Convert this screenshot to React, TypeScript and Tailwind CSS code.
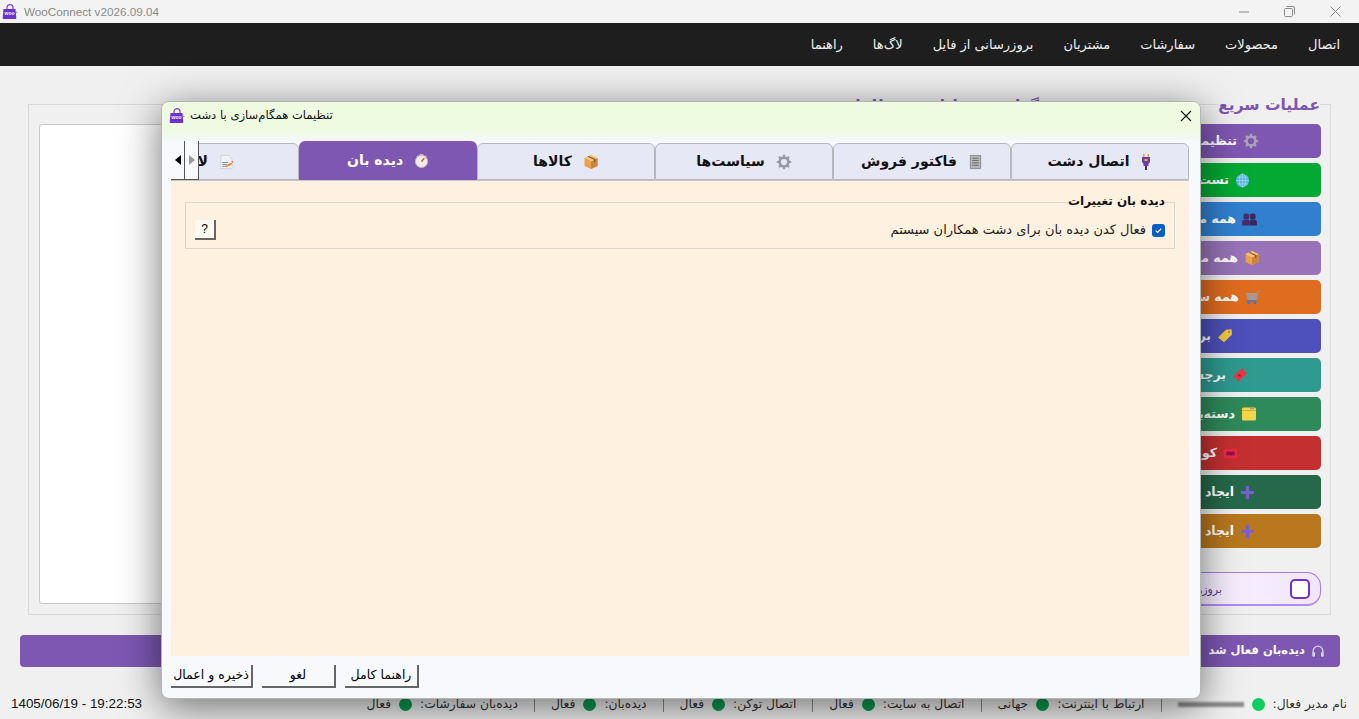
import { type ReactNode } from 'react';

const Logo = ({ size = 16 }: { size?: number }) => (
  <svg width={size} height={size} viewBox="0 0 16 16" className="shrink-0">
    <path d="M5 5V3.600a3 3 0 0 1 6 0V5" fill="none" stroke="#7c3fd0" strokeWidth="1.200" />
    <path d="M1.500 5h12l.8 9a1 1 0 0 1-1 1H1.700a1 1 0 0 1-1-1z" fill="#6d2fd6" />
    <path d="M14 7.500l2 .8-2 .9z" fill="#22c7c7" />
    <text x="7.500" y="11.400" textAnchor="middle" fontSize="5" fontWeight="700" fill="#fff" fontFamily="Liberation Sans">woo</text>
  </svg>
);

const Gear = ({ c = '#a8a4b4' }: { c?: string }) => (
  <svg width="16" height="16" viewBox="0 0 16 16" className="shrink-0">
    <circle cx="8" cy="8" r="4.400" fill="none" stroke={c} strokeWidth="2.600" />
    <path d="M8 .8v2.600M8 12.600v2.600M.8 8h2.600M12.600 8h2.600M2.900 2.900l1.900 1.900M11.200 11.200l1.900 1.900M13.100 2.900l-1.900 1.900M4.800 11.200l-1.900 1.900" stroke={c} strokeWidth="2.200" />
  </svg>
);

const Globe = () => (
  <svg width="15" height="15" viewBox="0 0 16 16" className="shrink-0">
    <circle cx="8" cy="8" r="7" fill="#56b4e4" />
    <path d="M1 8h14M8 1v14M2.400 4.400h11.200M2.400 11.600h11.200" stroke="#a7dcf4" strokeWidth="0.800" />
    <ellipse cx="8" cy="8" rx="3.400" ry="7" fill="none" stroke="#a7dcf4" strokeWidth="0.800" />
  </svg>
);

const Users = () => (
  <svg width="15" height="13" viewBox="0 0 16 14" className="shrink-0">
    <rect x="1.500" y="0.500" width="6" height="6.500" rx="2" fill="#4a2b6b" />
    <rect x="8.500" y="0.500" width="6" height="6.500" rx="2" fill="#3d2560" />
    <path d="M0 13.500V9.600c0-1.400 1-2.400 2.400-2.400h4.400c1 0 1.200.8 1.200 2.400v3.900z" fill="#4a2b6b" />
    <path d="M8 13.500V9.600c0-1.400 1-2.400 2.400-2.400h3.200c1.400 0 2.400 1 2.400 2.400v3.900z" fill="#3d2560" />
  </svg>
);

const Box = () => (
  <svg width="16" height="16" viewBox="0 0 16 16" className="shrink-0">
    <path d="M8 1l6.500 3v8L8 15l-6.500-3V4z" fill="#e8a24c" />
    <path d="M8 7.400L14.500 4v8L8 15z" fill="#cf8535" />
    <path d="M1.500 4L8 1l6.500 3L8 7.400z" fill="#f3c27e" />
    <path d="M4.400 2.600l6.600 3.200v2.400l1.400-.7V5L5.800 2z" fill="#8a5a2a" />
  </svg>
);

const Cart = () => (
  <svg width="16" height="16" viewBox="0 0 16 16" className="shrink-0">
    <path d="M1 4h11.500l-1 7H2.500z" fill="#a79a96" />
    <path d="M11.500 11L13 2.500h2" fill="none" stroke="#8b99a8" strokeWidth="1.200" />
    <path d="M1.500 12h10" stroke="#3b78c4" strokeWidth="1.200" />
    <circle cx="3.500" cy="14" r="1.300" fill="#3b78c4" />
    <circle cx="10" cy="14" r="1.300" fill="#3b78c4" />
  </svg>
);

const Tag = () => (
  <svg width="16" height="16" viewBox="0 0 16 16" className="shrink-0">
    <path d="M1 9.500L9 1.800l5.500-.6.500 5.300-8 7.800z" fill="#f2c93e" />
    <circle cx="12" cy="4" r="1" fill="#e0603c" />
  </svg>
);

const Ticket = () => (
  <svg width="16" height="16" viewBox="0 0 16 16" className="shrink-0">
    <path d="M1 10l9-9 1.800 1.800a1.500 1.500 0 0 0 2 2L15 6l-9 9-1.200-1.200a1.500 1.500 0 0 0-2.400-2.400z" fill="#ee3340" />
    <path d="M6.500 7.500l2 2" stroke="#a8101e" strokeWidth="1.500" />
  </svg>
);

const Folder = () => (
  <svg width="16" height="16" viewBox="0 0 16 16" className="shrink-0">
    <rect x="1" y="1.500" width="14" height="13" rx="1.500" fill="#f7d54a" />
    <path d="M1 4.500h14" stroke="#d8b22e" />
    <path d="M9 2.800h4" stroke="#7a8fb0" />
  </svg>
);

const Coupon = () => (
  <svg width="15" height="13" viewBox="0 0 16 14" className="shrink-0">
    <rect x="1" y="2" width="14" height="10" rx="2" fill="#ee2b42" />
    <rect x="3.500" y="5" width="9" height="4" fill="#8c1450" />
  </svg>
);

const Plus = () => (
  <svg width="15" height="15" viewBox="0 0 16 16" className="shrink-0">
    <path d="M6.300 1h3.400v5.300H15v3.400H9.700V15H6.300V9.700H1V6.300h5.300z" fill="#7a5fd0" />
  </svg>
);

const Plug = () => (
  <svg width="12" height="16" viewBox="0 0 12 16" className="shrink-0">
    <path d="M3 0h1.500v3H3zM7.500 0H9v3H7.500z" fill="#e0a93a" />
    <path d="M2 3h8v5l-1.500 2v2h-5v-2L2 8z" fill="#6a3fa0" />
    <rect x="5" y="12" width="2" height="4" fill="#42285f" />
    <rect x="4.500" y="5" width="3" height="2" fill="#e0a93a" />
  </svg>
);

const Invoice = () => (
  <svg width="15" height="16" viewBox="0 0 16 16" className="shrink-0">
    <path d="M2.500 1h11v14h-11z" fill="#b7b7b7" stroke="#777" strokeWidth="0.800" />
    <path d="M4.500 4h7M4.500 6.500h7M4.500 9h7M4.500 11.500h7" stroke="#6a6a6a" />
  </svg>
);

const Stopwatch = () => (
  <svg width="15" height="15" viewBox="0 0 16 16" className="shrink-0">
    <circle cx="8" cy="9" r="6.500" fill="#f2ece6" stroke="#c7c0ba" />
    <path d="M6 1h4v1.500H6zM2.500 3.500l1.500-1 1 1-1.500 1zM13.500 3.500l-1.500-1-1 1 1.500 1z" fill="#c7c0ba" />
    <path d="M8 9l3-3.500" stroke="#e0462e" strokeWidth="1.500" />
  </svg>
);

const LogIcon = () => (
  <svg width="15" height="16" viewBox="0 0 16 16" className="shrink-0">
    <path d="M2 1h8l4 4v10H2z" fill="#f2f2f6" stroke="#c9c9d2" strokeWidth="0.800" />
    <path d="M3.500 8.500h6M3.500 10.500h5M3.500 12.500h4" stroke="#7d8aa0" />
    <path d="M6 12.500l7-4 1.500 1.500-7 3.500z" fill="#f08a24" />
    <path d="M13 7.500l2-.7-.5 2z" fill="#ea3a6a" />
  </svg>
);

const Headphones = () => (
  <svg width="14" height="14" viewBox="0 0 16 16" className="shrink-0" fill="none">
    <path d="M2.500 10V8a5.500 5.500 0 0 1 11 0v2" stroke="#d9d6e6" strokeWidth="1.500" />
    <rect x="1.500" y="9" width="3" height="5.500" rx="1.200" fill="#d9d6e6" />
    <rect x="11.500" y="9" width="3" height="5.500" rx="1.200" fill="#d9d6e6" />
  </svg>
);

type QuickAction = { label: string; icon: ReactNode; row: string };

const quickActions: QuickAction[] = [
  { label: 'تنظیمات همگام‌سازی', icon: <Gear />, row: 'bg-[#7e57b2] pr-[62px]' },
  { label: 'تست اتصال به سایت', icon: <Globe />, row: 'bg-[#04a934] pr-[71px]' },
  { label: 'همه مشتریان', icon: <Users />, row: 'bg-[#3180d0] pr-[64px]' },
  { label: 'همه محصولات', icon: <Box />, row: 'bg-[#9873b8] pr-[61px]' },
  { label: 'همه سفارشات', icon: <Cart />, row: 'bg-[#e06c1f] pr-[60px]' },
  { label: 'برچسب‌ها', icon: <Tag />, row: 'bg-[#4e50bb] pr-[88px]' },
  { label: 'برچسب‌های ویژه', icon: <Ticket />, row: 'bg-[#2f9a90] pr-[73px]' },
  { label: 'دسته‌بندی‌ها', icon: <Folder />, row: 'bg-[#2e8a5a] pr-[64px]' },
  { label: 'کوپن‌ها', icon: <Coupon />, row: 'bg-[#c43030] pr-[83px]' },
  { label: 'ایجاد محصول جدید', icon: <Plus />, row: 'bg-[#26694a] pr-[66px]' },
  { label: 'ایجاد سفارش جدید', icon: <Plus />, row: 'bg-[#b9781e] pr-[66px]' },
];

const navItems = ['اتصال', 'محصولات', 'سفارشات', 'مشتریان', 'بروزرسانی از فایل', 'لاگ‌ها', 'راهنما'];

const tabs = [
  { label: 'اتصال دشت', icon: <Plug />, place: 'justify-center' },
  { label: 'فاکتور فروش', icon: <Invoice />, place: 'justify-center' },
  { label: 'سیاست‌ها', icon: <Gear c="#9a98a6" />, place: 'justify-center' },
  { label: 'کالاها', icon: <Box />, place: 'justify-center' },
  { label: 'دیده بان', icon: <Stopwatch />, place: 'justify-center', active: true },
  { label: 'لاگ‌ها', icon: <LogIcon />, place: 'justify-start pr-[64px]' },
];

const statusItems = [
  { label: 'ارتباط با اینترنت:', value: 'جهانی' },
  { label: 'اتصال به سایت:', value: 'فعال' },
  { label: 'اتصال توکن:', value: 'فعال' },
  { label: 'دیده‌بان:', value: 'فعال' },
  { label: 'دیده‌بان سفارشات:', value: 'فعال' },
];

const DialogButton = ({ children, className }: { children: ReactNode; className: string }) => (
  <button className={`h-[23px] flex items-center justify-center bg-[#f7f9fb] border-r-2 border-b-2 border-r-[#666] border-b-[#666] text-[12.5px] text-black ${className}`}>
    {children}
  </button>
);

const SyncDialog = () => (
  <div className="absolute left-[161px] top-[101px] w-[1040px] h-[598px] flex flex-col rounded-lg border border-[#b4b8b4] bg-[#f7f9fc] shadow-[0_8px_40px_rgba(0,0,0,0.55)] overflow-hidden">
    <div className="h-[28px] shrink-0 flex items-center gap-[5px] pl-[7px] pr-[7px] bg-[#eefbe1]" dir="ltr">
      <Logo />
      <span dir="rtl" className="text-[11.6px] text-[#111]">تنظیمات همگام‌سازی با دشت</span>
      <svg width="12" height="12" viewBox="0 0 12 12" className="ml-auto mr-[1px]">
        <path d="M1 1l10 10M11 1L1 11" stroke="#111" strokeWidth="1.100" />
      </svg>
    </div>
    <div className="h-[11px] shrink-0 bg-gradient-to-b from-[#eefbe1] to-[#f5f7fb]" />

    <div className="relative ml-[9px] mr-[11px] h-[39px] shrink-0">
      <div className="flex items-end h-full overflow-hidden" dir="rtl">
        {tabs.map((tab) =>
          tab.active ? (
            <div key={tab.label} className={`w-[178px] h-[39px] shrink-0 flex items-center gap-[11px] rounded-t-md bg-[#7e57b2] text-white text-[14px] font-bold ${tab.place}`}>
              {tab.icon}
              <span>{tab.label}</span>
            </div>
          ) : (
            <div key={tab.label} className={`w-[178px] h-[37px] shrink-0 flex items-center gap-[11px] rounded-t-md border border-[#b6b8c0] bg-[#e6e8f6] text-[#111] text-[14px] font-bold ${tab.place}`}>
              {tab.icon}
              <span>{tab.label}</span>
            </div>
          ),
        )}
      </div>
      <div className="absolute left-0 top-0 h-[39px] w-[28px] flex bg-[#f8f9fc] border-b border-[#555]">
        <div className="w-[14px] flex items-center justify-center border-r border-[#555]">
          <span className="w-0 h-0 border-y-[5px] border-y-transparent border-r-[6px] border-r-black" />
        </div>
        <div className="w-[14px] flex items-center justify-center border-r border-[#555]">
          <span className="w-0 h-0 border-y-[5px] border-y-transparent border-l-[6px] border-l-[#999]" />
        </div>
      </div>
    </div>

    <div className="ml-[9px] mr-[11px] h-[476px] shrink-0 bg-[#fef1df] border-t border-[#c4c6cc] px-[14px] pt-[21px]" dir="rtl">
      <div className="relative h-[47px] border border-[#dcd8d0] flex items-center justify-between pr-[9px] pl-[9px] pt-[9px]">
        <span className="absolute right-[9px] -top-[9px] bg-[#fef1df] text-[12px] font-bold text-[#111] leading-[15px]">دیده بان تغییرات</span>
        <label className="flex items-center gap-[6px] text-[13px] text-[#222]">
          <span className="w-[13px] h-[13px] rounded-[3px] bg-[#0a5fc4] flex items-center justify-center">
            <svg width="9" height="9" viewBox="0 0 10 10">
              <path d="M2 5.200l2 2 4-4.200" fill="none" stroke="#fff" strokeWidth="1.200" />
            </svg>
          </span>
          فعال کدن دیده بان برای دشت همکاران سیستم
        </label>
        <button className="w-[21px] h-[20px] bg-[#fdfaf3] border-r-2 border-b-2 border-r-[#666] border-b-[#666] text-[12px] text-black flex items-center justify-center font-['Liberation_Sans',sans-serif]">?</button>
      </div>
    </div>

    <div className="flex gap-[9px] pl-[9px] pt-[9px]" dir="ltr">
      <DialogButton className="w-[82px]"><span dir="rtl">ذخیره و اعمال</span></DialogButton>
      <DialogButton className="w-[74px]"><span dir="rtl">لغو</span></DialogButton>
      <DialogButton className="w-[74px]"><span dir="rtl">راهنما کامل</span></DialogButton>
    </div>
  </div>
);

export default function App() {
  return (
    <div className="relative w-screen h-screen overflow-hidden bg-[#f0f0f0] flex flex-col font-['DejaVu_Sans',sans-serif]">
      {/* window title */}
      <div className="h-[23px] shrink-0 flex items-center bg-[#f3f3f3] pl-[2px] gap-[6px]">
        <Logo />
        <span className="text-[11.7px] text-[#8a8a8a] font-['Liberation_Sans',sans-serif]">WooConnect v2026.09.04</span>
        <svg width="10" height="2" viewBox="0 0 10 2" className="ml-auto mr-[29px]"><path d="M0 1h10" stroke="#8a8a8a" /></svg>
        <svg width="11" height="11" viewBox="0 0 11 11" className="mr-[29px]" fill="none" stroke="#8a8a8a">
          <rect x="0.500" y="2.500" width="8" height="8" rx="1" />
          <path d="M2.500 .5h6.500a1.500 1.500 0 0 1 1.500 1.500v6.500" />
        </svg>
        <svg width="11" height="11" viewBox="0 0 11 11" className="mr-[18px]"><path d="M.5.5l10 10M10.500.5l-10 10" stroke="#8a8a8a" /></svg>
      </div>

      {/* menu */}
      <nav className="h-[43px] shrink-0 bg-[#1e1e1e] flex items-center gap-[30px] pr-[19px]" dir="rtl">
        {navItems.map((item) => (
          <span key={item} className="text-[13px] text-[#f0f0f0]">{item}</span>
        ))}
      </nav>

      {/* main panels */}
      <div className="h-[511px] shrink-0 mt-[38px] mx-[28px] flex gap-[10px]" dir="rtl">
        <section className="relative w-[271px] shrink-0 border border-[#d8d8d8] px-[9px] pt-[19px] flex flex-col gap-[5px]">
          <h2 className="absolute right-[10px] -top-[10px] bg-[#f0f0f0] text-[15.5px] leading-[20px] font-bold text-[#7e57b2]">عملیات سریع</h2>
          {quickActions.map((a) => (
            <button key={a.label} className={`h-[34px] shrink-0 rounded-[5px] flex items-center gap-[6px] text-[12.5px] font-bold text-white ${a.row}`}>
              {a.icon}
              <span>{a.label}</span>
            </button>
          ))}
          <div className="mt-[19px] h-[34px] shrink-0 rounded-[14px] border border-[#a47cf0] border-b-2 border-b-[#b388ff] bg-gradient-to-r from-[#ffffff] to-[#f1e6ff] flex items-center gap-[68px] pr-[10px]">
            <span className="w-[20px] h-[20px] rounded-[5px] border-2 border-[#6d2fd6] bg-white shrink-0" />
            <span className="text-[11px] text-[#5a3a94] mt-[4px]">بروزرسانی خودکار</span>
          </div>
        </section>
        <section className="relative flex-1 border border-[#d8d8d8] p-[10px] pt-[19px]">
          <h2 className="absolute right-[10px] -top-[9px] bg-[#f0f0f0] text-[15.5px] leading-[20px] font-bold text-[#7e57b2]">گزارش عملیات و خطاها</h2>
          <div className="h-full bg-white border border-[#c8c8c8] rounded-[3px]" />
        </section>
      </div>

      {/* active banner */}
      <div className="h-[32px] shrink-0 mt-[20px] ml-[20px] mr-[19px] rounded-[4px] bg-[#7e57b2] flex items-center gap-[6px] pr-[15px] text-[11.5px] font-bold text-white" dir="rtl">
        <Headphones />
        <span>دیده‌بان فعال شد</span>
      </div>

      {/* status bar */}
      <div className="flex-1 flex items-end justify-between pb-[7px] pl-[11px] pr-[12px]" dir="ltr">
        <span className="text-[13.4px] text-[#111] font-['Liberation_Sans',sans-serif] leading-[16px]">1405/06/19 - 19:22:53</span>
        <div className="flex items-center gap-[16px] text-[12.3px] leading-[16px] text-[#333]" dir="rtl">
          <div className="flex items-center gap-[8px]">
            <span>نام مدیر فعال:</span>
            <span className="w-[13px] h-[13px] rounded-full bg-[#0fcf60]" />
            <span className="w-[66px] h-[5px] bg-[#8a8a8a] blur-[1px]" />
          </div>
          {statusItems.map((s) => (
            <div key={s.label} className="flex items-center gap-[8px] border-r border-[#8a8a8a] pr-[16px]">
              <span>{s.label}</span>
              <span className="w-[13px] h-[13px] rounded-full bg-[#0a9a50]" />
              <span>{s.value}</span>
            </div>
          ))}
        </div>
      </div>

      <SyncDialog />
    </div>
  );
}
